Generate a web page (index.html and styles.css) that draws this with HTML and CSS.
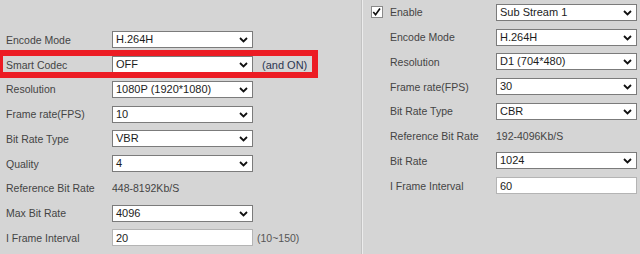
FILE: index.html
```html
<!DOCTYPE html>
<html>
<head>
    <meta charset="utf-8" />
    <meta name="viewport" content="width=device-width, initial-scale=1.0" />
    <title>Video Encode</title>
    <link rel="stylesheet" href="styles.css">
</head>
<body>
    <div class="page">
        <div class="panel main-stream">
            <div class="row">
                <label>Encode Mode</label>
                <span class="select">H.264H<svg viewBox="0 0 9 6"><path d="M1 1 L4.5 4.5 L8 1"/></svg></span>
            </div>
            <div class="row highlight">
                <label>Smart Codec</label>
                <span class="select">OFF<svg viewBox="0 0 9 6"><path d="M1 1 L4.5 4.5 L8 1"/></svg></span>
                <span class="note">(and ON)</span>
            </div>
            <div class="row">
                <label>Resolution</label>
                <span class="select">1080P (1920*1080)<svg viewBox="0 0 9 6"><path d="M1 1 L4.5 4.5 L8 1"/></svg></span>
            </div>
            <div class="row">
                <label>Frame rate(FPS)</label>
                <span class="select">10<svg viewBox="0 0 9 6"><path d="M1 1 L4.5 4.5 L8 1"/></svg></span>
            </div>
            <div class="row">
                <label>Bit Rate Type</label>
                <span class="select">VBR<svg viewBox="0 0 9 6"><path d="M1 1 L4.5 4.5 L8 1"/></svg></span>
            </div>
            <div class="row">
                <label>Quality</label>
                <span class="select">4<svg viewBox="0 0 9 6"><path d="M1 1 L4.5 4.5 L8 1"/></svg></span>
            </div>
            <div class="row">
                <label>Reference Bit Rate</label>
                <span class="value">448-8192Kb/S</span>
            </div>
            <div class="row">
                <label>Max Bit Rate</label>
                <span class="select">4096<svg viewBox="0 0 9 6"><path d="M1 1 L4.5 4.5 L8 1"/></svg></span>
            </div>
            <div class="row">
                <label>I Frame Interval</label>
                <input class="text-input" type="text" value="20">
                <span class="hint">(10~150)</span>
            </div>
        </div>

        <div class="panel sub-stream">
            <div class="row">
                <span class="cell"><span class="checkbox"><svg viewBox="0 0 12 12"><path d="M2.5 6 L5 9 L9.8 2.2"/></svg></span></span>
                <label>Enable</label>
                <span class="select">Sub Stream 1<svg viewBox="0 0 9 6"><path d="M1 1 L4.5 4.5 L8 1"/></svg></span>
            </div>
            <div class="row">
                <span class="cell"></span>
                <label>Encode Mode</label>
                <span class="select">H.264H<svg viewBox="0 0 9 6"><path d="M1 1 L4.5 4.5 L8 1"/></svg></span>
            </div>
            <div class="row">
                <span class="cell"></span>
                <label>Resolution</label>
                <span class="select">D1 (704*480)<svg viewBox="0 0 9 6"><path d="M1 1 L4.5 4.5 L8 1"/></svg></span>
            </div>
            <div class="row">
                <span class="cell"></span>
                <label>Frame rate(FPS)</label>
                <span class="select">30<svg viewBox="0 0 9 6"><path d="M1 1 L4.5 4.5 L8 1"/></svg></span>
            </div>
            <div class="row">
                <span class="cell"></span>
                <label>Bit Rate Type</label>
                <span class="select">CBR<svg viewBox="0 0 9 6"><path d="M1 1 L4.5 4.5 L8 1"/></svg></span>
            </div>
            <div class="row">
                <span class="cell"></span>
                <label>Reference Bit Rate</label>
                <span class="value">192-4096Kb/S</span>
            </div>
            <div class="row">
                <span class="cell"></span>
                <label>Bit Rate</label>
                <span class="select">1024<svg viewBox="0 0 9 6"><path d="M1 1 L4.5 4.5 L8 1"/></svg></span>
            </div>
            <div class="row">
                <span class="cell"></span>
                <label>I Frame Interval</label>
                <input class="text-input" type="text" value="60">
            </div>
        </div>
    </div>
</body>
</html>
```

FILE: styles.css
```css
body {
    margin: 0;
    background: #d5d5d5;
    font-family: 'Liberation Sans', Arial, sans-serif;
    color: #444;
    overflow: hidden;
}
.page {
    display: flex;
    height: 254px;
}
.panel {
    display: flex;
    flex-direction: column;
}
.main-stream {
    width: 361px;
    padding: 27.6px 0 0 6px;
    box-sizing: border-box;
}
.sub-stream {
    flex: 1;
    padding: 0 0 0 9px;
    border-left: 1px solid #c2c2c2;
    box-shadow: inset 1px 0 #ececec;
}
.row {
    height: 24.75px;
    display: flex;
    align-items: center;
}
label {
    width: 106px;
    font-size: 10.5px;
}
.cell {
    width: 19px;
    display: flex;
    align-items: center;
}
.select {
    position: relative;
    box-sizing: border-box;
    width: 141px;
    height: 17px;
    padding: 0 0 0 3px;
    background: #fff;
    border: 1px solid #7b7b7b;
    font-size: 11px;
    line-height: 15px;
    color: #1c1c1c;
}
.select svg {
    position: absolute;
    right: 4px;
    top: 5px;
    width: 9px;
    height: 6px;
    fill: none;
    stroke: #111;
    stroke-width: 1.8;
}
.text-input {
    box-sizing: border-box;
    width: 141px;
    height: 17px;
    margin: 0;
    padding: 0 0 0 3px;
    border: 1px solid #b4b4b4;
    background: #fff;
    font-family: 'Liberation Sans', Arial, sans-serif;
    font-size: 11px;
    color: #1c1c1c;
    outline: none;
}
.value {
    font-size: 10.5px;
}
.note {
    margin-left: 9px;
    font-size: 11px;
    color: #2c3550;
}
.hint {
    margin-left: 4px;
    font-size: 10.5px;
    color: #555;
}
.highlight {
    position: relative;
}
/* red annotation frame drawn over the row */
.highlight::after {
    content: "";
    position: absolute;
    left: -9px;
    top: -2.4px;
    width: 309px;
    height: 16px;
    border: 6px solid #ec1c24;
}
.checkbox {
    display: flex;
    box-sizing: border-box;
    width: 12px;
    height: 12px;
    background: #fff;
    border: 1px solid #8a8a8a;
}
.checkbox svg {
    width: 12px;
    height: 12px;
    margin: -1px 0 0 -1px;
    fill: none;
    stroke: #111;
    stroke-width: 1.8;
}
```
